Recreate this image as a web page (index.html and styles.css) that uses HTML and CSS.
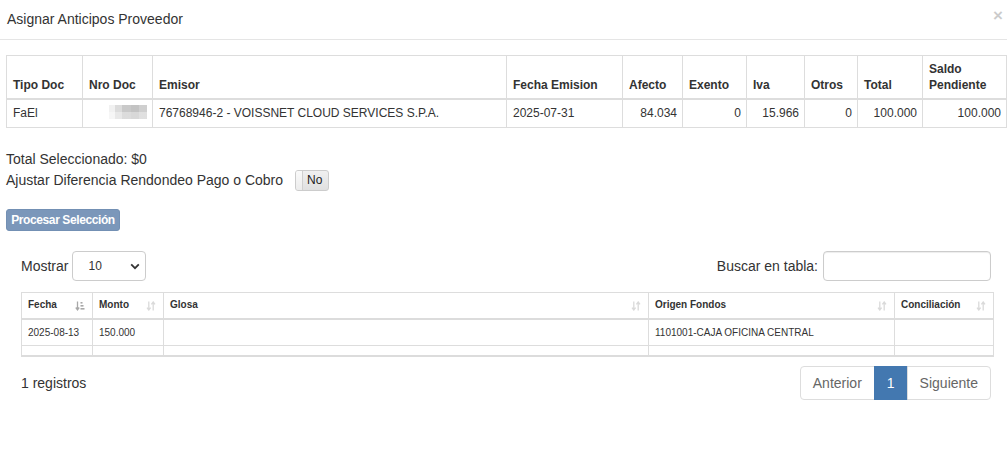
FILE: index.html
```html
<!DOCTYPE html>
<html lang="es">
<head>
<meta charset="utf-8">
<title>Asignar Anticipos Proveedor</title>
<link rel="stylesheet" href="styles.css">
</head>
<body>
<div class="modal">
  <div class="modal-header">
    <h4 class="modal-title">Asignar Anticipos Proveedor</h4>
    <span class="close">&times;</span>
  </div>
  <div class="modal-body">
    <table class="docs">
      <colgroup>
        <col class="c76"><col class="c70"><col class="c354"><col class="c116"><col class="c60">
        <col class="c64"><col class="c58"><col class="c53"><col class="c65"><col class="c84">
      </colgroup>
      <thead>
        <tr>
          <th>Tipo Doc</th><th>Nro Doc</th><th>Emisor</th><th>Fecha Emision</th><th>Afecto</th>
          <th>Exento</th><th>Iva</th><th>Otros</th><th>Total</th><th>Saldo<br>Pendiente</th>
        </tr>
      </thead>
      <tbody>
        <tr>
          <td>FaEl</td>
          <td class="num"><span class="blur"></span></td>
          <td>76768946-2 - VOISSNET CLOUD SERVICES S.P.A.</td>
          <td>2025-07-31</td>
          <td class="num">84.034</td>
          <td class="num">0</td>
          <td class="num">15.966</td>
          <td class="num">0</td>
          <td class="num">100.000</td>
          <td class="num">100.000</td>
        </tr>
      </tbody>
    </table>

    <div class="summary">
      <div class="line">Total Seleccionado: $0</div>
      <div class="line adjust">Ajustar Diferencia Rendondeo Pago o Cobro
        <span class="toggle"><span class="handle"></span><span class="toggle-label">No</span></span>
      </div>
    </div>

    <button class="btn-process" type="button">Procesar Selección</button>

    <div class="dt">
      <div class="dt-top">
        <label class="dt-length">Mostrar
          <span class="select">10
            <svg class="chev" width="10" height="7" viewBox="0 0 10 7"><path d="M1.2 1.4 L5 5.2 L8.8 1.4" fill="none" stroke="#333" stroke-width="1.8"/></svg>
          </span>
        </label>
        <label class="dt-search">Buscar en tabla: <span class="search"></span></label>
      </div>

      <table class="anticipos">
        <colgroup>
          <col class="d71"><col class="d71"><col class="d485"><col class="d246"><col class="d99">
        </colgroup>
        <thead>
          <tr>
            <th>Fecha
              <svg class="sort active" width="10" height="10" viewBox="0 0 10 10"><path d="M2.5 0.5 V8.5 M0.8 6.5 L2.5 8.8 L4.2 6.5" fill="none" stroke="currentColor" stroke-width="1.3"/><rect x="5.5" y="1" width="2" height="1.6" fill="currentColor"/><rect x="5.5" y="4" width="3" height="1.6" fill="currentColor"/><rect x="5.5" y="7" width="4" height="1.6" fill="currentColor"/></svg>
            </th>
            <th>Monto
              <svg class="sort" width="10" height="10" viewBox="0 0 10 10"><path d="M2.8 0.5 V8.8 M1 6.6 L2.8 9 L4.6 6.6 M7.2 9.5 V1.2 M5.4 3.4 L7.2 1 L9 3.4" fill="none" stroke="currentColor" stroke-width="1.3"/></svg>
            </th>
            <th>Glosa
              <svg class="sort" width="10" height="10" viewBox="0 0 10 10"><path d="M2.8 0.5 V8.8 M1 6.6 L2.8 9 L4.6 6.6 M7.2 9.5 V1.2 M5.4 3.4 L7.2 1 L9 3.4" fill="none" stroke="currentColor" stroke-width="1.3"/></svg>
            </th>
            <th>Origen Fondos
              <svg class="sort" width="10" height="10" viewBox="0 0 10 10"><path d="M2.8 0.5 V8.8 M1 6.6 L2.8 9 L4.6 6.6 M7.2 9.5 V1.2 M5.4 3.4 L7.2 1 L9 3.4" fill="none" stroke="currentColor" stroke-width="1.3"/></svg>
            </th>
            <th>Conciliación
              <svg class="sort" width="10" height="10" viewBox="0 0 10 10"><path d="M2.8 0.5 V8.8 M1 6.6 L2.8 9 L4.6 6.6 M7.2 9.5 V1.2 M5.4 3.4 L7.2 1 L9 3.4" fill="none" stroke="currentColor" stroke-width="1.3"/></svg>
            </th>
          </tr>
        </thead>
        <tbody>
          <tr>
            <td>2025-08-13</td>
            <td>150.000</td>
            <td></td>
            <td>1101001-CAJA OFICINA CENTRAL</td>
            <td></td>
          </tr>
          <tr class="empty">
            <td></td><td></td><td></td><td></td><td></td>
          </tr>
        </tbody>
      </table>

      <div class="dt-bottom">
        <div class="dt-info">1 registros</div>
        <ul class="pagination">
          <li><span>Anterior</span></li>
          <li class="active"><span>1</span></li>
          <li><span>Siguiente</span></li>
        </ul>
      </div>
    </div>
  </div>
</div>
</body>
</html>
```

FILE: styles.css
```css
* { box-sizing: border-box; }

html, body {
  margin: 0;
  padding: 0;
  background: #fff;
  font-family: "Liberation Sans", Arial, Helvetica, sans-serif;
  font-size: 14px;
  color: #333;
}

.modal { width: 1007px; }

.modal-header {
  position: relative;
  height: 40px;
  padding: 9px 7px 0 7px;
  border-bottom: 1px solid #e5e5e5;
}

.modal-title {
  margin: 0;
  font-size: 14px;
  font-weight: normal;
  line-height: 20px;
  color: #333;
}

.close {
  position: absolute;
  right: 4px;
  top: 6px;
  font-size: 17px;
  font-weight: bold;
  line-height: 20px;
  color: #000;
  opacity: 0.2;
}

.modal-body {
  padding: 15px 1px 30px 6px;
}

/* top documents table */
.docs {
  width: 1000px;
  table-layout: fixed;
  border-collapse: collapse;
  font-size: 12px;
}
.c76 { width: 76px; } .c70 { width: 70px; } .c354 { width: 354px; } .c116 { width: 116px; }
.c60 { width: 60px; } .c64 { width: 64px; } .c58 { width: 58px; } .c53 { width: 53px; }
.c65 { width: 65px; } .c84 { width: 84px; }

.docs th {
  text-align: left;
  vertical-align: bottom;
  font-weight: bold;
  line-height: 16px;
  padding: 5px 5px 5px 6px;
  border: 1px solid #ddd;
  border-bottom: 2px solid #ddd;
}
.docs td {
  line-height: 17px;
  padding: 5px 5px 5px 6px;
  border: 1px solid #ddd;
  white-space: nowrap;
}
.docs td.num { text-align: right; }

.blur {
  display: inline-block;
  width: 38px;
  height: 14px;
  vertical-align: -2px;
  background:
    linear-gradient(180deg, rgba(255,255,255,0) 0 50%, rgba(255,255,255,0.35) 50% 100%),
    linear-gradient(90deg, #f1f1f1 0 16%, #dcdcdc 16% 34%, #c9c9c9 34% 58%, #c3c3c3 58% 80%, #cfcfcf 80% 100%);
}

/* summary */
.summary { margin-top: 21px; }
.line { line-height: 20px; }
.adjust {
  display: flex;
  align-items: center;
  height: 22px;
}
.toggle {
  display: inline-flex;
  align-items: center;
  margin-left: 12px;
  width: 34px;
  height: 21px;
  border: 1px solid #ccc;
  border-radius: 3px;
  background: linear-gradient(#f0f0f0, #e0e0e0);
  overflow: hidden;
}
.handle {
  width: 7px;
  height: 100%;
  background: linear-gradient(#fafafa, #ececec);
  border-right: 1px solid #d0d0d0;
}
.toggle-label {
  font-size: 12px;
  color: #222;
  margin-left: 4px;
}

/* button */
.btn-process {
  display: block;
  margin-top: 18px;
  width: 114px;
  height: 22px;
  padding: 1px 0;
  font-family: inherit;
  font-size: 12px;
  letter-spacing: -0.4px;
  font-weight: bold;
  line-height: 18px;
  text-align: center;
  color: #fff;
  background: #7b97ba;
  border: 1px solid #7390b4;
  border-radius: 3px;
}

/* datatable */
.dt {
  margin: 20px 15px 0 15px;
}
.dt-top {
  display: flex;
  justify-content: space-between;
  align-items: center;
  height: 30px;
}
.dt-length, .dt-search {
  display: flex;
  align-items: center;
  font-size: 14px;
}
.select {
  display: flex;
  align-items: center;
  justify-content: space-between;
  margin-left: 4px;
  width: 74px;
  height: 30px;
  padding: 0 5px 0 15px;
  font-size: 12px;
  border: 1px solid #ccc;
  border-radius: 4px;
  background: #fff;
}
.search {
  display: block;
  margin-left: 5px;
  width: 168px;
  height: 30px;
  border: 1px solid #ccc;
  border-radius: 4px;
  box-shadow: inset 0 1px 1px rgba(0,0,0,0.075);
}

.anticipos {
  margin-top: 11px;
  width: 972px;
  table-layout: fixed;
  border-collapse: collapse;
  font-size: 10px;
  border-bottom: 2px solid #dcdcdc;
}
.d71 { width: 71px; } .d485 { width: 485px; } .d246 { width: 246px; } .d99 { width: 99px; }

.anticipos th {
  position: relative;
  text-align: left;
  font-weight: bold;
  line-height: 13px;
  padding: 5px 18px 7px 6px;
  border: 1px solid #ddd;
  border-bottom: 2px solid #dcdcdc;
}
.anticipos td {
  line-height: 13px;
  height: 25px;
  padding: 6px;
  border: 1px solid #ddd;
}
.anticipos tr.empty td {
  height: 10px;
  padding: 0;
}

.sort {
  position: absolute;
  right: 7px;
  top: 8px;
  color: #dadada;
}
.sort.active { color: #a8a8a8; }

.dt-bottom {
  display: flex;
  justify-content: space-between;
  align-items: center;
  margin-top: 9px;
}
.dt-info { font-size: 14px; }

.pagination {
  display: flex;
  margin: 0;
  padding: 0;
  list-style: none;
}
.pagination li span {
  display: block;
  height: 34px;
  padding: 6px 12px;
  line-height: 20px;
  font-size: 14px;
  color: #666;
  border: 1px solid #ddd;
  margin-left: -1px;
  background: #fff;
}
.pagination li:first-child span {
  margin-left: 0;
  border-radius: 4px 0 0 4px;
}
.pagination li:last-child span { border-radius: 0 4px 4px 0; }
.pagination li.active span {
  background: #4378b0;
  border-color: #4378b0;
  color: #fff;
}
```
